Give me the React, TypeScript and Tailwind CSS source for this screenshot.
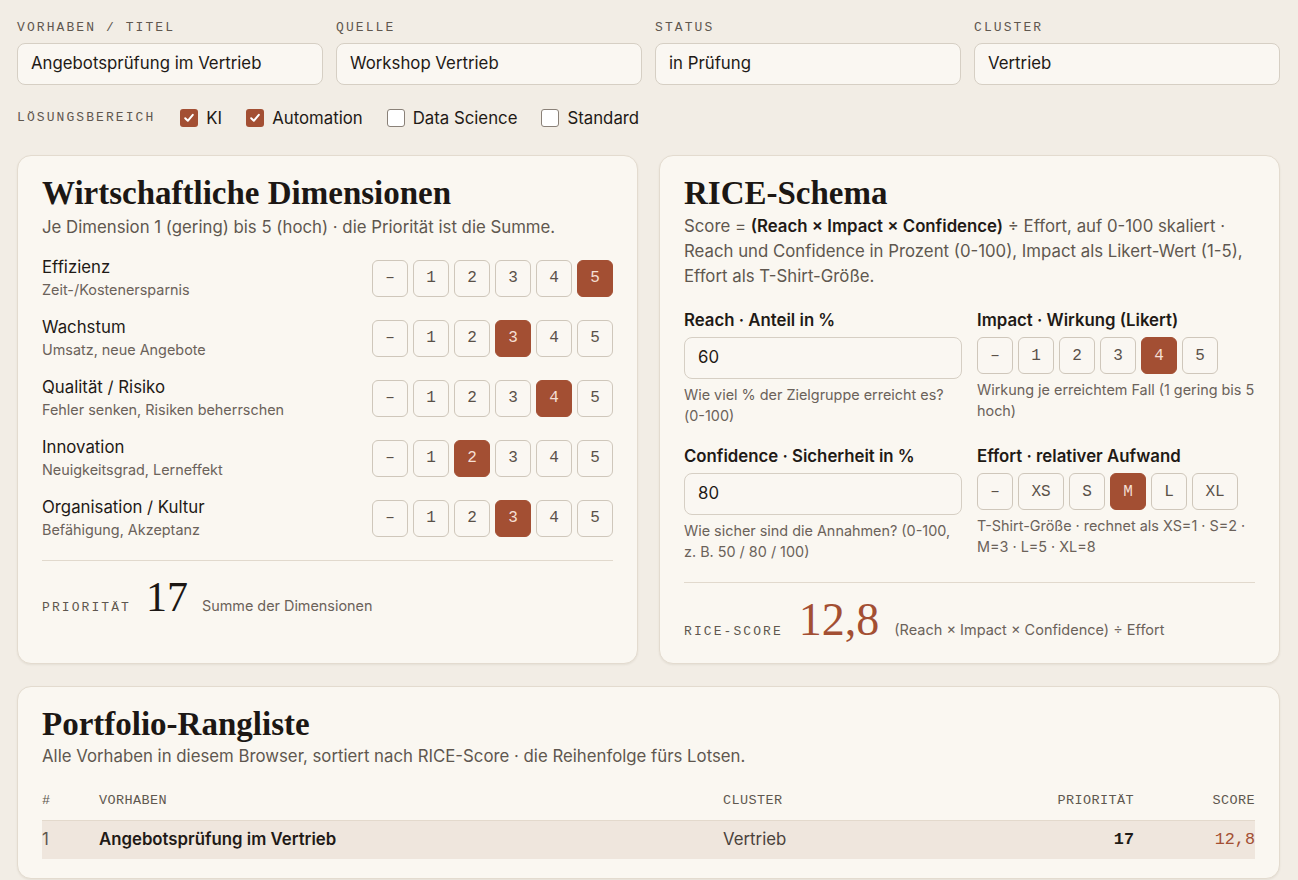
import React from "react";

const SANS = "font-['Inter','Noto_Sans',sans-serif]";
const SERIF = "font-['Liberation_Serif','DejaVu_Serif',serif]";
const MONO = "font-['Liberation_Mono','DejaVu_Sans_Mono',monospace]";

function FieldLabel({ children }: { children: React.ReactNode }) {
  return (
    <div className={`${MONO} text-[13px] leading-[14px] tracking-[0.16em] text-[#5f574f] uppercase`}>
      {children}
    </div>
  );
}

function TextField({ label, value }: { label: string; value: string }) {
  return (
    <div className="flex flex-col gap-[8px]">
      <FieldLabel>{label}</FieldLabel>
      <div className="h-[42px] rounded-[8px] border border-[#d6cfc4] bg-[#faf7f2] px-[13px] flex items-center text-[16.8px] text-[#1f1a16]">
        {value}
      </div>
    </div>
  );
}

function Check({ label, checked }: { label: string; checked: boolean }) {
  return (
    <label className="flex items-center gap-2 text-[16.8px] leading-[26px] text-[#1f1a16]">
      {checked ? (
        <span className="w-[18px] h-[18px] rounded-[3px] bg-[#a34f33] flex items-center justify-center">
          <svg width="12" height="12" viewBox="0 0 12 12" fill="none">
            <path d="M2.2 6.3 L4.8 8.8 L9.8 2.8" stroke="#fff" strokeWidth="2" strokeLinecap="round" strokeLinejoin="round" />
          </svg>
        </span>
      ) : (
        <span className="w-[18px] h-[18px] rounded-[3px] border border-[#8a8178] bg-white" />
      )}
      {label}
    </label>
  );
}

function Pill({ label, active, wide }: { label: string; active?: boolean; wide?: boolean }) {
  return (
    <div
      className={`${MONO} ${wide ? "w-[46px]" : "w-[36px]"} h-[37px] rounded-[6px] flex items-center justify-center text-[16px] ${
        active
          ? "bg-[#a34f33] text-[#f5dfd4] border border-[#a34f33]"
          : "bg-[#faf7f2] text-[#5a5149] border border-[#cfc7bb]"
      }`}
    >
      {label}
    </div>
  );
}

function Scale({ value }: { value: number }) {
  const items = ["–", "1", "2", "3", "4", "5"];
  return (
    <div className="flex gap-[5px]">
      {items.map((it, i) => (
        <Pill key={it} label={it} active={i === value} />
      ))}
    </div>
  );
}

const dims = [
  { name: "Effizienz", sub: "Zeit-/Kostenersparnis", v: 5 },
  { name: "Wachstum", sub: "Umsatz, neue Angebote", v: 3 },
  { name: "Qualität / Risiko", sub: "Fehler senken, Risiken beherrschen", v: 4 },
  { name: "Innovation", sub: "Neuigkeitsgrad, Lerneffekt", v: 2 },
  { name: "Organisation / Kultur", sub: "Befähigung, Akzeptanz", v: 3 },
];

function Card({ children, className = "" }: { children: React.ReactNode; className?: string }) {
  return (
    <div className={`rounded-[14px] border border-[#e3dbcf] bg-[#faf7f1] shadow-[0_1px_2px_rgba(80,60,40,0.08)] ${className}`}>
      {children}
    </div>
  );
}

function CardTitle({ children }: { children: React.ReactNode }) {
  return <h2 className={`${SERIF} font-bold text-[33px] leading-[36px] text-[#1c1714]`}>{children}</h2>;
}

function NumberInput({ value }: { value: string }) {
  return (
    <div className="mt-[6px] h-[42px] rounded-[8px] border border-[#d6cfc4] bg-[#faf7f2] px-[13px] flex items-center text-[16.8px]">
      {value}
    </div>
  );
}

function Help({ children }: { children: React.ReactNode }) {
  return <div className="mt-[5px] text-[14.4px] leading-[21px] text-[#6b625a]">{children}</div>;
}

export default function App() {
  return (
    <div className={`${SANS} min-h-[880px] bg-[#f2ede5] pl-[17px] pr-[18px] pt-[21px] pb-[20px] text-[#1f1a16]`}>
      {/* Stammdaten */}
      <div className="grid grid-cols-4 gap-[13px]">
        <TextField label="Vorhaben / Titel" value="Angebotsprüfung im Vertrieb" />
        <TextField label="Quelle" value="Workshop Vertrieb" />
        <TextField label="Status" value="in Prüfung" />
        <TextField label="Cluster" value="Vertrieb" />
      </div>

      <div className="mt-[20px] flex items-center">
        <FieldLabel>Lösungsbereich</FieldLabel>
        <div className="ml-[25px] flex items-center gap-[24px]">
          <Check label="KI" checked />
          <Check label="Automation" checked />
          <Check label="Data Science" checked={false} />
          <Check label="Standard" checked={false} />
        </div>
      </div>

      <div className="mt-[24px] grid grid-cols-2 gap-[21px]">
        {/* Wirtschaftliche Dimensionen */}
        <Card className="px-6 pt-[19px] pb-6 flex flex-col">
          <CardTitle>Wirtschaftliche Dimensionen</CardTitle>
          <p className="mt-[4px] text-[16.8px] leading-6 text-[#5f574f]">
            Je Dimension 1 (gering) bis 5 (hoch) · die Priorität ist die Summe.
          </p>
          <div className="mt-[17px] flex flex-col gap-[16px]">
            {dims.map((d) => (
              <div key={d.name} className="flex items-center justify-between">
                <div>
                  <div className="text-[16.8px] leading-[22px] text-[#1f1a16]">{d.name}</div>
                  <div className="mt-[2px] text-[14.4px] leading-5 text-[#6b625a]">{d.sub}</div>
                </div>
                <Scale value={d.v} />
              </div>
            ))}
          </div>
          <div className="mt-[20px] border-t border-[#e1d9cd]" />
          <div className="mt-[14px] flex items-baseline">
            <span className={`${MONO} text-[13px] tracking-[0.16em] text-[#5f574f]`}>PRIORITÄT</span>
            <span className={`${SERIF} ml-[15px] text-[42px] leading-[44px] text-[#1c1714]`}>17</span>
            <span className="ml-[14px] text-[14.4px] text-[#6b625a]">Summe der Dimensionen</span>
          </div>
        </Card>

        {/* RICE */}
        <Card className="px-6 pt-[19px] pb-[19px] flex flex-col">
          <CardTitle>RICE-Schema</CardTitle>
          <p className="mt-[3px] text-[16.8px] leading-[25px] text-[#5f574f]">
            Score = <b className="font-semibold text-[#1f1a16]">(Reach × Impact × Confidence)</b> ÷ Effort, auf 0-100 skaliert ·
            Reach und Confidence in Prozent (0-100), Impact als Likert-Wert (1-5), Effort als T-Shirt-Größe.
          </p>
          <div className="mt-[20px] grid grid-cols-2 gap-x-[15px] gap-y-[19px]">
            <div>
              <div className="text-[16.8px] leading-[22px] font-semibold">Reach · Anteil in %</div>
              <NumberInput value="60" />
              <Help>Wie viel % der Zielgruppe erreicht es? (0-100)</Help>
            </div>
            <div>
              <div className="text-[16.8px] leading-[22px] font-semibold">Impact · Wirkung (Likert)</div>
              <div className="mt-[6px]">
                <Scale value={4} />
              </div>
              <Help>Wirkung je erreichtem Fall (1 gering bis 5 hoch)</Help>
            </div>
            <div>
              <div className="text-[16.8px] leading-[22px] font-semibold">Confidence · Sicherheit in %</div>
              <NumberInput value="80" />
              <Help>Wie sicher sind die Annahmen? (0-100, z. B. 50 / 80 / 100)</Help>
            </div>
            <div>
              <div className="text-[16.8px] leading-[22px] font-semibold">Effort · relativer Aufwand</div>
              <div className="mt-[6px] flex gap-[5px]">
                <Pill label="–" />
                <Pill label="XS" wide />
                <Pill label="S" />
                <Pill label="M" active />
                <Pill label="L" />
                <Pill label="XL" wide />
              </div>
              <Help>T-Shirt-Größe · rechnet als XS=1 · S=2 · M=3 · L=5 · XL=8</Help>
            </div>
          </div>
          <div className="mt-[20px] border-t border-[#e1d9cd]" />
          <div className="mt-[13px] flex items-baseline">
            <span className={`${MONO} text-[13px] tracking-[0.16em] text-[#5f574f]`}>RICE-SCORE</span>
            <span className={`${SERIF} ml-[16px] text-[46px] leading-[48px] text-[#a34f33]`}>12,8</span>
            <span className="ml-[15px] text-[14.5px] text-[#6b625a]">(Reach × Impact × Confidence) ÷ Effort</span>
          </div>
        </Card>
      </div>

      {/* Rangliste */}
      <Card className="mt-[22px] px-6 pt-[19px] pb-[19px]">
        <CardTitle>Portfolio-Rangliste</CardTitle>
        <p className="mt-[2px] text-[16.8px] leading-6 text-[#5f574f]">
          Alle Vorhaben in diesem Browser, sortiert nach RICE-Score · die Reihenfolge fürs Lotsen.
        </p>
        <div className="mt-[14px]">
          <div className={`${MONO} flex items-center h-[38px] text-[13.5px] tracking-[0.03em] text-[#5f574f]`}>
            <div className="w-[57px]">#</div>
            <div className="w-[624px]">VORHABEN</div>
            <div className="flex-1">CLUSTER</div>
            <div className="w-[120px] text-right">PRIORITÄT</div>
            <div className="w-[121px] text-right">SCORE</div>
          </div>
          <div className="flex items-center h-[39px] bg-[#efe6dd] border-t border-[#e3d9cc] text-[16.8px]">
            <div className="w-[57px] text-[#5f574f]">1</div>
            <div className="w-[624px] font-semibold">Angebotsprüfung im Vertrieb</div>
            <div className="flex-1 text-[#4a423b]">Vertrieb</div>
            <div className={`${MONO} w-[120px] text-right font-bold`}>17</div>
            <div className={`${MONO} w-[121px] text-right text-[#a34f33]`}>12,8</div>
          </div>
        </div>
      </Card>
    </div>
  );
}
